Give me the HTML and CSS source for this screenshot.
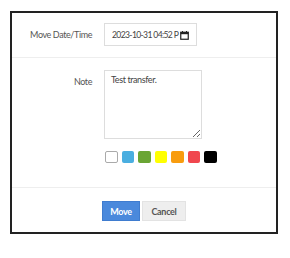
FILE: index.html
```html
<!DOCTYPE html>
<html>
<head>
<meta charset="utf-8">
<link rel="stylesheet" href="styles.css">
</head>
<body>
<div class="dialog">
  <div class="row row-date">
    <label class="label">Move Date/Time</label>
    <div class="date-input">
      <span class="date-text">2023-10-31 04:52 P</span>
      <svg class="cal" width="9" height="9" viewBox="0 0 9 9"><rect x="0.75" y="1.25" width="7.5" height="7" fill="none" stroke="#222" stroke-width="1.2"/><rect x="0.5" y="1" width="8" height="2.2" fill="#222"/><rect x="2" y="0" width="1" height="2" fill="#222"/><rect x="6" y="0" width="1" height="2" fill="#222"/></svg>
    </div>
  </div>
  <div class="row row-note">
    <label class="label label-note">Note</label>
    <div class="note-col">
      <textarea class="note">Test transfer.</textarea>
      <div class="swatches">
        <span class="swatch sw-white"></span>
        <span class="swatch sw-blue"></span>
        <span class="swatch sw-green"></span>
        <span class="swatch sw-yellow"></span>
        <span class="swatch sw-orange"></span>
        <span class="swatch sw-red"></span>
        <span class="swatch sw-black"></span>
      </div>
    </div>
  </div>
  <div class="footer">
    <button class="btn btn-move">Move</button>
    <button class="btn btn-cancel">Cancel</button>
  </div>
</div>
</body>
</html>
```
FILE: styles.css
```css
html, body {
  margin: 0;
  padding: 0;
  background: #fff;
}
body {
  font-family: "Lato", "Liberation Sans", sans-serif;
  font-size: 9px;
  letter-spacing: -0.4px;
  color: #555;
}
.dialog {
  margin: 11px 0 0 10px;
  border: 2px solid #222;
  box-sizing: border-box;
  width: 268px;
}
.row {
  display: grid;
  grid-template-columns: 80px 1fr;
  column-gap: 12px;
  border-bottom: 1px solid #eee;
}
.row-date {
  padding: 10px 0 11px;
  align-items: center;
}
.label {
  text-align: right;
  color: #555;
}
.label-note {
  padding-top: 6px;
}
.date-input {
  width: 93px;
  height: 23px;
  box-sizing: border-box;
  border: 1px solid #ddd;
  display: flex;
  align-items: center;
  padding: 0 1px 0 7px;
  gap: 0;
  color: #444;
  white-space: nowrap;
}
.date-text {
  font-size: 8.6px;
  letter-spacing: -0.65px;
}
.cal {
  flex: none;
  margin: 1px 0 0 1.5px;
}
.row-note {
  padding: 12px 0 24px;
}
.note-col {
  display: flex;
  flex-direction: column;
}
.note {
  width: 98px;
  height: 69px;
  box-sizing: border-box;
  border: 1px solid #ddd;
  font-family: inherit;
  font-size: 9px;
  letter-spacing: -0.4px;
  color: #444;
  padding: 3px 6px;
  margin: 0;
  resize: both;
  outline: none;
}
.swatches {
  display: flex;
  gap: 4px;
  margin-top: 12px;
  padding-left: 1px;
}
.swatch {
  width: 12.5px;
  height: 12px;
  border-radius: 2px;
  box-sizing: border-box;
}
.sw-white { background: #fff; border: 1px solid #aaa; }
.sw-blue { background: #4aaee0; }
.sw-green { background: #6aa534; }
.sw-yellow { background: #ffff00; }
.sw-orange { background: #f89c0e; }
.sw-red { background: #f0474e; }
.sw-black { background: #000; }
.footer {
  display: flex;
  justify-content: center;
  gap: 2px;
  padding: 13px 0 11px;
}
.btn {
  height: 20px;
  box-sizing: border-box;
  font-family: inherit;
  font-size: 9px;
  letter-spacing: -0.3px;
  padding: 0;
  margin: 0;
  border-radius: 0;
}
.btn-move {
  width: 38px;
  background: #4a89dc;
  border: 1px solid #3f7ccf;
  color: #fff;
  font-weight: bold;
}
.btn-cancel {
  width: 44px;
  background: #eee;
  border: 1px solid #e3e3e3;
  color: #555;
  font-weight: bold;
}
```
